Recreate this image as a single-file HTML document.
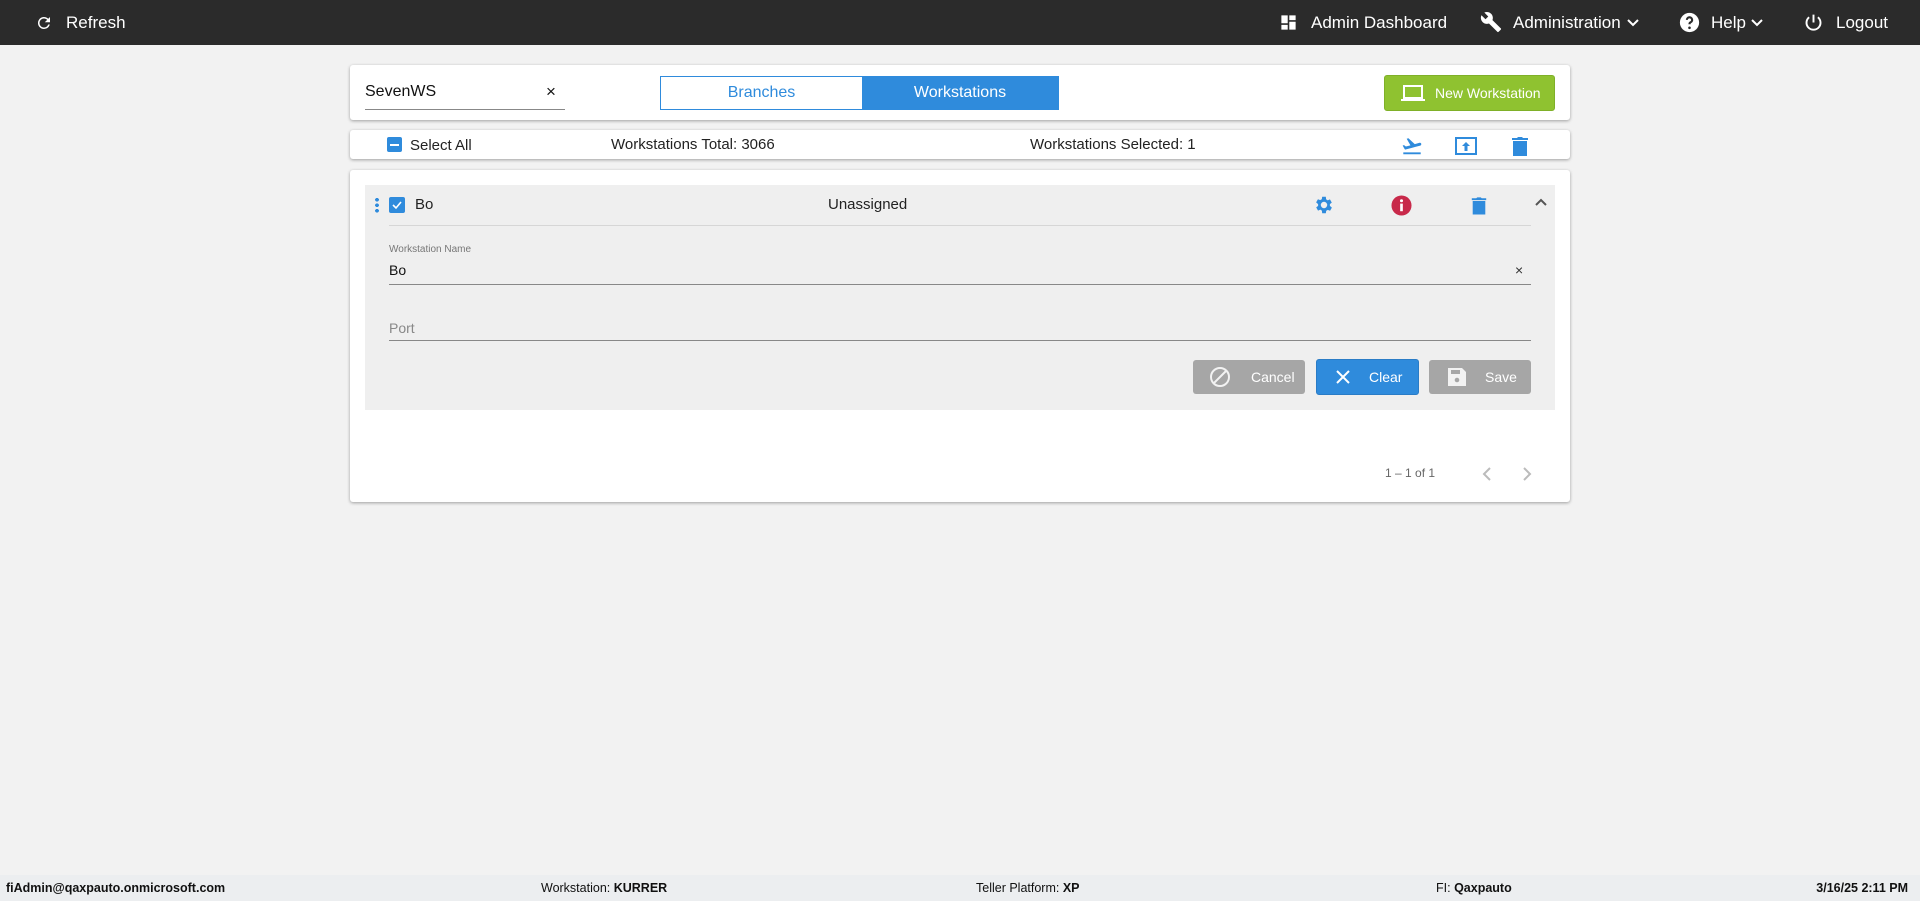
<!DOCTYPE html>
<html><head><meta charset="utf-8"><style>
*{box-sizing:border-box;margin:0;padding:0}
body{width:1920px;height:901px;background:#f2f2f2;font-family:"Liberation Sans",sans-serif;position:relative;overflow:hidden;color:#222}
.a{position:absolute}
.top{left:0;top:0;width:1920px;height:45px;background:#2b2b2b;color:#fff;font-size:17px}
.top .a{line-height:45px;top:0}
.card{background:#fff;border-radius:3px;box-shadow:0 1px 3px rgba(0,0,0,.35)}
.btn{color:#fff;font-size:14px;border-radius:3px;display:flex;align-items:center}
.foot{left:0;top:875px;width:1920px;height:26px;background:#eceef0;font-size:12.5px;line-height:26px;color:#111}
.foot b{font-weight:bold}
</style></head><body>
<div class="a top">
 <svg class="a" style="left:35px;top:14px" width="18" height="18" viewBox="0 0 24 24"><path d="M17.65 6.35A8 8 0 1 0 19.73 14h-2.08A6 6 0 1 1 12 6c1.66 0 3.14.69 4.22 1.78L13 11h7V4z" fill="#fff"/></svg>
 <div class="a" style="left:66px">Refresh</div>
 <svg class="a" style="left:1279px;top:13px" width="19" height="19" viewBox="0 0 24 24"><path d="M3 13h8V3H3zm0 8h8v-6H3zm10 0h8V11h-8zm0-18v6h8V3z" fill="#fff"/></svg>
 <div class="a" style="left:1311px">Admin Dashboard</div>
 <svg class="a" style="left:1480px;top:11px" width="22" height="22" viewBox="0 0 24 24"><path d="M22.7 19l-9.1-9.1c.9-2.3.4-5-1.5-6.9-2-2-5-2.4-7.4-1.3L9 6 6 9 1.6 4.7C.4 7.1.9 10.1 2.9 12.1c1.9 1.9 4.6 2.4 6.9 1.5l9.1 9.1c.4.4 1 .4 1.4 0l2.3-2.3c.5-.4.5-1.1.1-1.4z" fill="#fff"/></svg>
 <div class="a" style="left:1513px">Administration</div>
 <svg class="a" style="left:1627px;top:18px" width="12" height="10" viewBox="0 0 12 10"><path d="M1 2l5 5 5-5" stroke="#fff" stroke-width="2" fill="none"/></svg>
 <svg class="a" style="left:1679px;top:12px" width="21" height="21" viewBox="0 0 24 24"><circle cx="12" cy="12" r="11" fill="#fff"/><path d="M9 9a3 3 0 1 1 4.2 2.8c-.8.4-1.2 1-1.2 1.9V14" stroke="#2b2b2b" stroke-width="2.4" fill="none"/><circle cx="12" cy="18" r="1.5" fill="#2b2b2b"/></svg>
 <div class="a" style="left:1711px">Help</div>
 <svg class="a" style="left:1751px;top:18px" width="12" height="10" viewBox="0 0 12 10"><path d="M1 2l5 5 5-5" stroke="#fff" stroke-width="2" fill="none"/></svg>
 <svg class="a" style="left:1803px;top:12px" width="21" height="21" viewBox="0 0 24 24"><path d="M12 3v9M7 6a8 8 0 1 0 10 0" stroke="#fff" stroke-width="2.2" fill="none"/></svg>
 <div class="a" style="left:1836px">Logout</div>
</div>

<div class="a card" style="left:350px;top:65px;width:1220px;height:55px"></div>
<div class="a" style="left:365px;top:83px;font-size:16px;color:#111">SevenWS</div>
<div class="a" style="left:546px;top:82px;font-size:17px;color:#111">×</div>
<div class="a" style="left:365px;top:109px;width:200px;height:1px;background:#888"></div>
<div class="a" style="left:660px;top:76px;width:399px;height:34px;border:1px solid #2f8bdc;display:flex;font-size:16px">
 <div style="width:201px;text-align:center;line-height:32px;color:#2f8bdc;background:#fff">Branches</div>
 <div style="flex:1;text-align:center;line-height:32px;color:#fff;background:#2f8bdc">Workstations</div>
</div>
<div class="a btn" style="left:1384px;top:75px;width:171px;height:36px;background:#8fc230;border:1px solid #7fb028">
 <svg style="margin-left:16px" width="24" height="18" viewBox="0 0 24 18"><rect x="3" y="2" width="18" height="12" stroke="#fff" stroke-width="2" fill="none"/><path d="M0 16h24" stroke="#fff" stroke-width="2"/></svg>
 <span style="margin-left:10px">New Workstation</span></div>

<div class="a card" style="left:350px;top:130px;width:1220px;height:29px"></div>
<div class="a" style="left:387px;top:137px;width:15px;height:15px;background:#2f8bdc;border-radius:2px"><div style="margin:6.5px 3px;height:2px;background:#fff"></div></div>
<div class="a" style="left:410px;top:137px;font-size:15px">Select All</div>
<div class="a" style="left:611px;top:136px;font-size:15px">Workstations Total: 3066</div>
<div class="a" style="left:1030px;top:136px;font-size:15px">Workstations Selected: 1</div>
<svg class="a" style="left:1401px;top:135px" width="22" height="22" viewBox="0 0 24 24"><path d="M2.5 19h19v2h-19zm19.6-9.4c-.2-.8-1-1.3-1.8-1.1L15 10 8.1 3.6l-1.9.5 4.1 7.2-5 1.3-2-1.5-1.5.4 1.8 3.2.8 1.3 1.6-.4 5.3-1.4 4.4-1.2 5.3-1.4c.8-.3 1.3-1.1 1.1-1.9z" fill="#2f8bdc"/></svg>
<div class="a" style="left:1455px;top:137px;width:22px;height:18px;border:2px solid #2f8bdc"><svg style="position:absolute;left:5px;top:3px" width="8" height="9" viewBox="0 0 8 9"><path d="M4 0l4 4H5.5v5h-3V4H0z" fill="#2f8bdc"/></svg></div>
<svg class="a" style="left:1510px;top:135px" width="20" height="22" viewBox="0 0 20 22"><path d="M2 3h5l1-1h4l1 1h5v2H2zM3 6h14v15H3z" fill="#2f8bdc"/></svg>

<div class="a card" style="left:350px;top:170px;width:1220px;height:332px"></div>
<div class="a" style="left:365px;top:185px;width:1190px;height:225px;background:#efefef"></div>
<div class="a" style="left:375px;top:197px;width:4px;height:16px;background:radial-gradient(circle,#2f8bdc 1.8px,transparent 2px) 0 0/4px 5.5px"></div>
<div class="a" style="left:389px;top:197px;width:16px;height:16px;background:#2f8bdc;border-radius:2px"><svg width="16" height="16"><path d="M4 8l3 3 5-6" stroke="#fff" stroke-width="1.6" fill="none"/></svg></div>
<div class="a" style="left:415px;top:196px;font-size:15px">Bo</div>
<div class="a" style="left:828px;top:196px;font-size:15px">Unassigned</div>
<svg class="a" style="left:1313px;top:194px" width="22" height="22" viewBox="0 0 24 24"><path d="M19.4 13a7.7 7.7 0 0 0 0-2l2.1-1.6-2-3.5-2.5 1a7.3 7.3 0 0 0-1.7-1L15 3h-4l-.4 2.7a7.3 7.3 0 0 0-1.7 1l-2.5-1-2 3.5L6.6 11a7.7 7.7 0 0 0 0 2l-2.1 1.6 2 3.5 2.5-1a7.3 7.3 0 0 0 1.7 1L11 21h4l.4-2.7a7.3 7.3 0 0 0 1.7-1l2.5 1 2-3.5zM13 15.5a3.5 3.5 0 1 1 0-7 3.5 3.5 0 0 1 0 7z" fill="#2f8bdc" transform="translate(-1 0)"/></svg>
<svg class="a" style="left:1391px;top:195px" width="21" height="21" viewBox="0 0 22 22"><circle cx="11" cy="11" r="10.5" fill="#c8294a"/><rect x="9.6" y="9" width="2.8" height="8" fill="#fff"/><circle cx="11" cy="6" r="1.6" fill="#fff"/></svg>
<svg class="a" style="left:1470px;top:195px" width="18" height="21" viewBox="0 0 20 22"><path d="M2 3h5l1-1h4l1 1h5v2H2zM3 6h14v15H3z" fill="#2f8bdc"/></svg>
<svg class="a" style="left:1534px;top:197px" width="14" height="10" viewBox="0 0 14 10"><path d="M2 8l5-5 5 5" stroke="#555" stroke-width="2" fill="none"/></svg>
<div class="a" style="left:389px;top:225px;width:1142px;height:1px;background:#d6d6d6"></div>
<div class="a" style="left:389px;top:244px;font-size:10px;color:#777">Workstation Name</div>
<div class="a" style="left:389px;top:262px;font-size:14px;color:#111">Bo</div>
<div class="a" style="left:1515px;top:262px;font-size:14px;color:#333">×</div>
<div class="a" style="left:389px;top:284px;width:1142px;height:1px;background:#888"></div>
<div class="a" style="left:389px;top:320px;font-size:14px;color:#888">Port</div>
<div class="a" style="left:389px;top:340px;width:1142px;height:1px;background:#888"></div>
<div class="a btn" style="left:1193px;top:360px;width:112px;height:34px;background:#a6a6a6">
 <svg style="margin-left:16px" width="22" height="22" viewBox="0 0 22 22"><circle cx="11" cy="11" r="9" stroke="#f2f2f2" stroke-width="2" fill="none"/><path d="M5 17L17 5" stroke="#f2f2f2" stroke-width="2"/></svg><span style="margin-left:20px">Cancel</span></div>
<div class="a btn" style="left:1316px;top:359px;width:103px;height:36px;background:#2f8bdc;border:1px solid #2a7cc6">
 <svg style="margin-left:18px" width="16" height="16" viewBox="0 0 16 16"><path d="M2 2l12 12M14 2L2 14" stroke="#fff" stroke-width="2"/></svg><span style="margin-left:18px">Clear</span></div>
<div class="a btn" style="left:1429px;top:360px;width:102px;height:34px;background:#a6a6a6">
 <svg style="margin-left:18px" width="20" height="20" viewBox="0 0 20 20"><path d="M1 1h14l4 4v14H1z" fill="#f2f2f2"/><rect x="4" y="3" width="9" height="4" fill="#a6a6a6"/><circle cx="10" cy="13" r="2.3" fill="#a6a6a6"/></svg><span style="margin-left:18px">Save</span></div>
<div class="a" style="left:1385px;top:466px;font-size:12px;color:#666">1 – 1 of 1</div>
<svg class="a" style="left:1481px;top:466px" width="12" height="16" viewBox="0 0 12 16"><path d="M9 2L3 8l6 6" stroke="#bbb" stroke-width="2" fill="none"/></svg>
<svg class="a" style="left:1521px;top:466px" width="12" height="16" viewBox="0 0 12 16"><path d="M3 2l6 6-6 6" stroke="#bbb" stroke-width="2" fill="none"/></svg>

<div class="a foot">
 <b class="a" style="left:6px">fiAdmin@qaxpauto.onmicrosoft.com</b>
 <span class="a" style="left:541px">Workstation: <b>KURRER</b></span>
 <span class="a" style="left:976px">Teller Platform: <b>XP</b></span>
 <span class="a" style="left:1436px">FI: <b>Qaxpauto</b></span>
 <b class="a" style="right:12px">3/16/25 2:11 PM</b>
</div>
</body></html>
